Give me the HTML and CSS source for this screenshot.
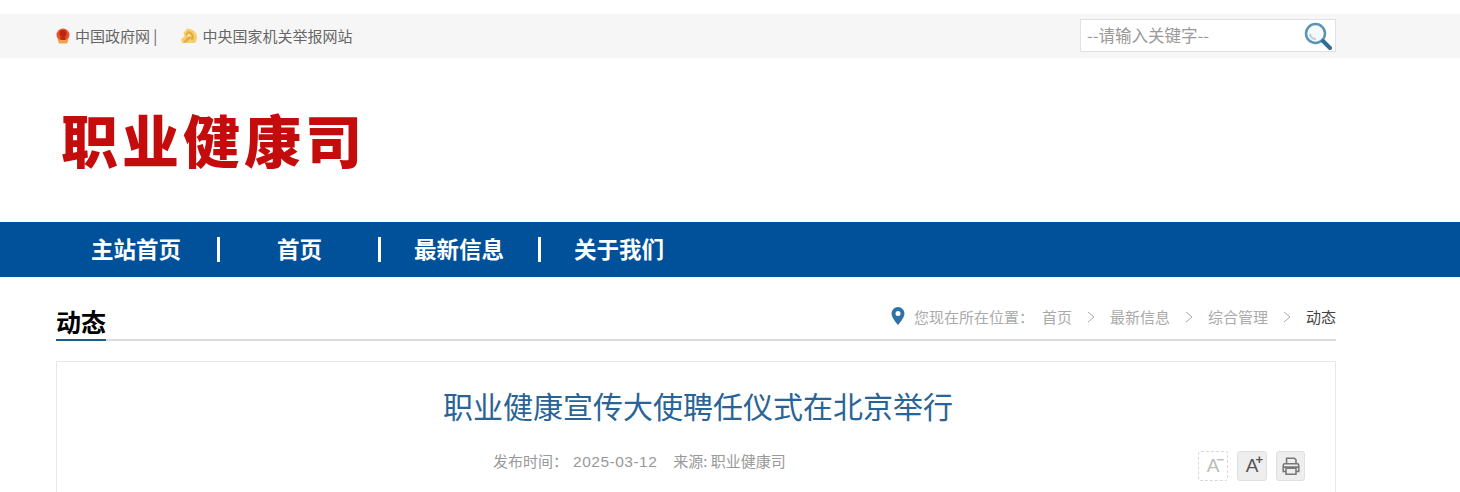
FILE: index.html
```html
<!DOCTYPE html>
<html lang="zh-CN">
<head>
	<meta charset="utf-8">
	<title>职业健康宣传大使聘任仪式在北京举行</title>
	<link rel="stylesheet" href="styles.css">
</head>
<body>

<div class="topbar">
	<div class="wrap topbar-inner">
		<div class="toplinks">
			<svg class="emblem" viewBox="0 0 14 16">
				<circle cx="7" cy="7" r="6.500" fill="#e2552a"/>
				<circle cx="7" cy="5.500" r="3.500" fill="#c4200f"/>
				<path d="M1.500 11.500h11L11 15.500H3z" fill="#f2a24a"/>
				<path d="M4.500 9h5v3h-5z" fill="#b8300f"/>
			</svg>
			<span class="toplink">中国政府网 |</span>
			<svg class="party" viewBox="0 0 16 16">
				<path d="M6 .5C11 .5 16 4 16 9C16 11.500 15 13.500 14 15H1L0 11.500L3.500 8L2.500 5Z" fill="#f0d272"/>
				<path d="M7 3C10 3.500 13 6 13 9.500L11.500 12.500L9.500 10.500L5 14.500H2L6.500 9L4.500 6.500Z" fill="#e9a93c"/>
				<path d="M7.500 5.500C9.500 6 10.500 8 10.500 9.500L8.500 8L7 9.500L6 7.500Z" fill="#fbeaa8"/>
			</svg>
			<span class="toplink">中央国家机关举报网站</span>
		</div>
		<div class="search">
			<span class="search-text">--请输入关键字--</span>
			<svg class="search-icon" viewBox="0 0 28 28">
				<circle cx="11.500" cy="11.500" r="9.500" fill="#f4f9fc" stroke="#5c93b8" stroke-width="2.500"/>
				<path d="M6 12a6 6 0 0 0 6 5" fill="none" stroke="#b9d2e2" stroke-width="2"/>
				<path d="M19 19l7 7" stroke="#2f6d9c" stroke-width="4" stroke-linecap="round"/>
			</svg>
		</div>
	</div>
</div>

<div class="wrap masthead">
	<div class="logo">职业健康司</div>
</div>

<div class="nav">
	<div class="wrap nav-inner">
		<a class="nav-item">主站首页</a>
		<span class="nav-sep sep-one"></span>
		<a class="nav-item nav-home">首页</a>
		<span class="nav-sep sep-two"></span>
		<a class="nav-item nav-news">最新信息</a>
		<span class="nav-sep sep-three"></span>
		<a class="nav-item nav-about">关于我们</a>
	</div>
</div>

<div class="wrap">
	<div class="crumbbar">
		<h3 class="section-title">动态</h3>
		<div class="crumbs">
			<svg class="pin" viewBox="0 0 14 18">
				<path fill-rule="evenodd" d="M7 0a6.500 6.500 0 0 1 6.500 6.500C13.500 11 7 18 7 18S.5 11 .5 6.500A6.500 6.500 0 0 1 7 0ZM7 4a2.500 2.500 0 1 0 0 5a2.500 2.500 0 0 0 0-5Z" fill="#2f73a6"/>
			</svg>
			<span class="crumb-label">您现在所在位置：</span>
			<span>首页</span>
			<svg class="chev" viewBox="0 0 8 12"><path d="M1 1l6 5l-6 5" fill="none" stroke="#aaa"/></svg>
			<span>最新信息</span>
			<svg class="chev" viewBox="0 0 8 12"><path d="M1 1l6 5l-6 5" fill="none" stroke="#aaa"/></svg>
			<span>综合管理</span>
			<svg class="chev" viewBox="0 0 8 12"><path d="M1 1l6 5l-6 5" fill="none" stroke="#aaa"/></svg>
			<span class="crumb-current">动态</span>
		</div>
	</div>

	<div class="article">
		<h1 class="article-title">职业健康宣传大使聘任仪式在北京举行</h1>
		<div class="meta">
			<div class="meta-text">
				<span>发布时间：</span><span class="meta-date">2025-03-12</span><span>来源: 职业健康司</span>
			</div>
			<div class="tools">
				<span class="tool tool-off">A<i class="tool-mark">−</i></span>
				<span class="tool">A<i class="tool-mark">+</i></span>
				<span class="tool tool-print">
					<svg class="print" viewBox="0 0 18 18">
						<path d="M5 7V2h7l1.500 1.500V7M2 8.500a1.500 1.500 0 0 1 1.500-1.500h11A1.500 1.500 0 0 1 16 8.500V14h-2.500M4.500 14H2V8.500M4.500 11h9v5.500h-9zM2 10h14" fill="none" stroke="#777" stroke-width="1.400"/>
					</svg>
				</span>
			</div>
		</div>
	</div>
</div>

</body>
</html>
```

FILE: styles.css
```css
* {
	box-sizing: border-box;
	margin: 0;
	padding: 0;
}
html, body {
	height: 492px;
	overflow: hidden;
}
body {
	background: #fff;
	color: #666;
	font-family: "Noto Sans CJK SC", "Noto Sans", sans-serif;
	padding-top: 14px;
}
.wrap {
	width: 1280px;
	margin-left: 56px;
}

/* top bar */
.topbar {
	height: 44px;
	background: #f6f6f6;
}
.topbar-inner {
	display: flex;
	justify-content: space-between;
	align-items: center;
	height: 44px;
}
.toplinks {
	display: flex;
	align-items: center;
	font-size: 15px;
	color: #666;
}
.toplink {
	margin-top: -2px;
	white-space: nowrap;
}
.emblem {
	width: 14px;
	height: 16px;
	margin-right: 5px;
}
.party {
	width: 16px;
	height: 16px;
	margin: 0 5px 0 24px;
}
.search {
	display: flex;
	justify-content: space-between;
	align-items: center;
	width: 256px;
	height: 33px;
	margin-top: -1px;
	background: #fff;
	border: 1px solid #dfe1e6;
	padding: 0 3px 0 6px;
}
.search-text {
	font-size: 16.500px;
	color: #999;
	margin-top: -2px;
}
.search-icon {
	width: 28px;
	height: 28px;
}

/* masthead */
.masthead {
	height: 164px;
	padding: 44px 0 0 5px;
}
.logo {
	font-size: 57px;
	font-weight: 900;
	line-height: 72px;
	letter-spacing: 4px;
	color: #c40c0c;
	white-space: nowrap;
}

/* nav */
.nav {
	height: 55px;
	background: #00519a;
}
.nav-inner {
	display: flex;
	align-items: center;
	height: 55px;
	padding-left: 35px;
}
.nav-item {
	font-size: 22.500px;
	font-weight: 700;
	line-height: 30px;
	margin-top: -4px;
	color: #fff;
	white-space: nowrap;
}
.nav-sep {
	width: 3px;
	height: 25px;
	background: #fff;
}
.sep-one {
	margin: 0 57px 0 36px;
}
.sep-two {
	margin: 0 33px 0 56px;
}
.sep-three {
	margin: 0 33px 0 34px;
}

/* breadcrumb row */
.crumbbar {
	display: flex;
	justify-content: space-between;
	align-items: flex-end;
	height: 64px;
	border-bottom: 2px solid #dddde0;
}
.section-title {
	font-size: 25px;
	font-weight: 700;
	line-height: 32px;
	width: 50px;
	height: 36px;
	color: #000;
	border-bottom: 2px solid #1c5f86;
	margin-bottom: -2px;
	white-space: nowrap;
}
.crumbs {
	display: flex;
	align-items: center;
	font-size: 15px;
	color: #aaa;
	height: 24px;
	margin-bottom: 11px;
}
.pin {
	width: 14px;
	height: 18px;
	margin-right: 9px;
}
.crumb-label {
	margin-right: 8px;
}
.chev {
	width: 8px;
	height: 12px;
	margin: 1px 15px 0;
}
.crumb-current {
	color: #444;
}

/* article */
.article {
	margin-top: 20px;
	height: 300px;
	border: 1px solid #e8e8e8;
	padding: 21px 30px 0;
}
.article-title {
	font-size: 30px;
	font-weight: 400;
	line-height: 44px;
	text-align: center;
	color: #2a6496;
	margin-left: 4px;
}
.meta {
	display: flex;
	justify-content: space-between;
	align-items: flex-start;
	margin-top: 24px;
	height: 32px;
}
.meta-text {
	margin-left: 406px;
	font-size: 15px;
	line-height: 20px;
	color: #999;
	white-space: nowrap;
}
.meta-date {
	font-family: "Liberation Sans", sans-serif;
	font-size: 15.500px;
	letter-spacing: 0.500px;
	margin: 0 16px 0 5px;
}
.tools {
	display: flex;
	gap: 9px;
}
.tool {
	position: relative;
	display: flex;
	align-items: center;
	justify-content: center;
	width: 30px;
	height: 30px;
	background: #eeeeef;
	border: 1px solid #e0e0e0;
	border-radius: 3px;
	font-family: "Liberation Sans", sans-serif;
	font-size: 19px;
	color: #555;
}
.tool-print {
	width: 29px;
}
.tool-off {
	background: #fff;
	border: 1px dashed #d8d8d8;
	color: #bbb;
}
.tool-mark {
	position: absolute;
	top: 2px;
	right: 3px;
	font-size: 13px;
	font-style: normal;
	font-weight: 700;
	line-height: 12px;
}
.print {
	width: 20px;
	height: 20px;
}
```
